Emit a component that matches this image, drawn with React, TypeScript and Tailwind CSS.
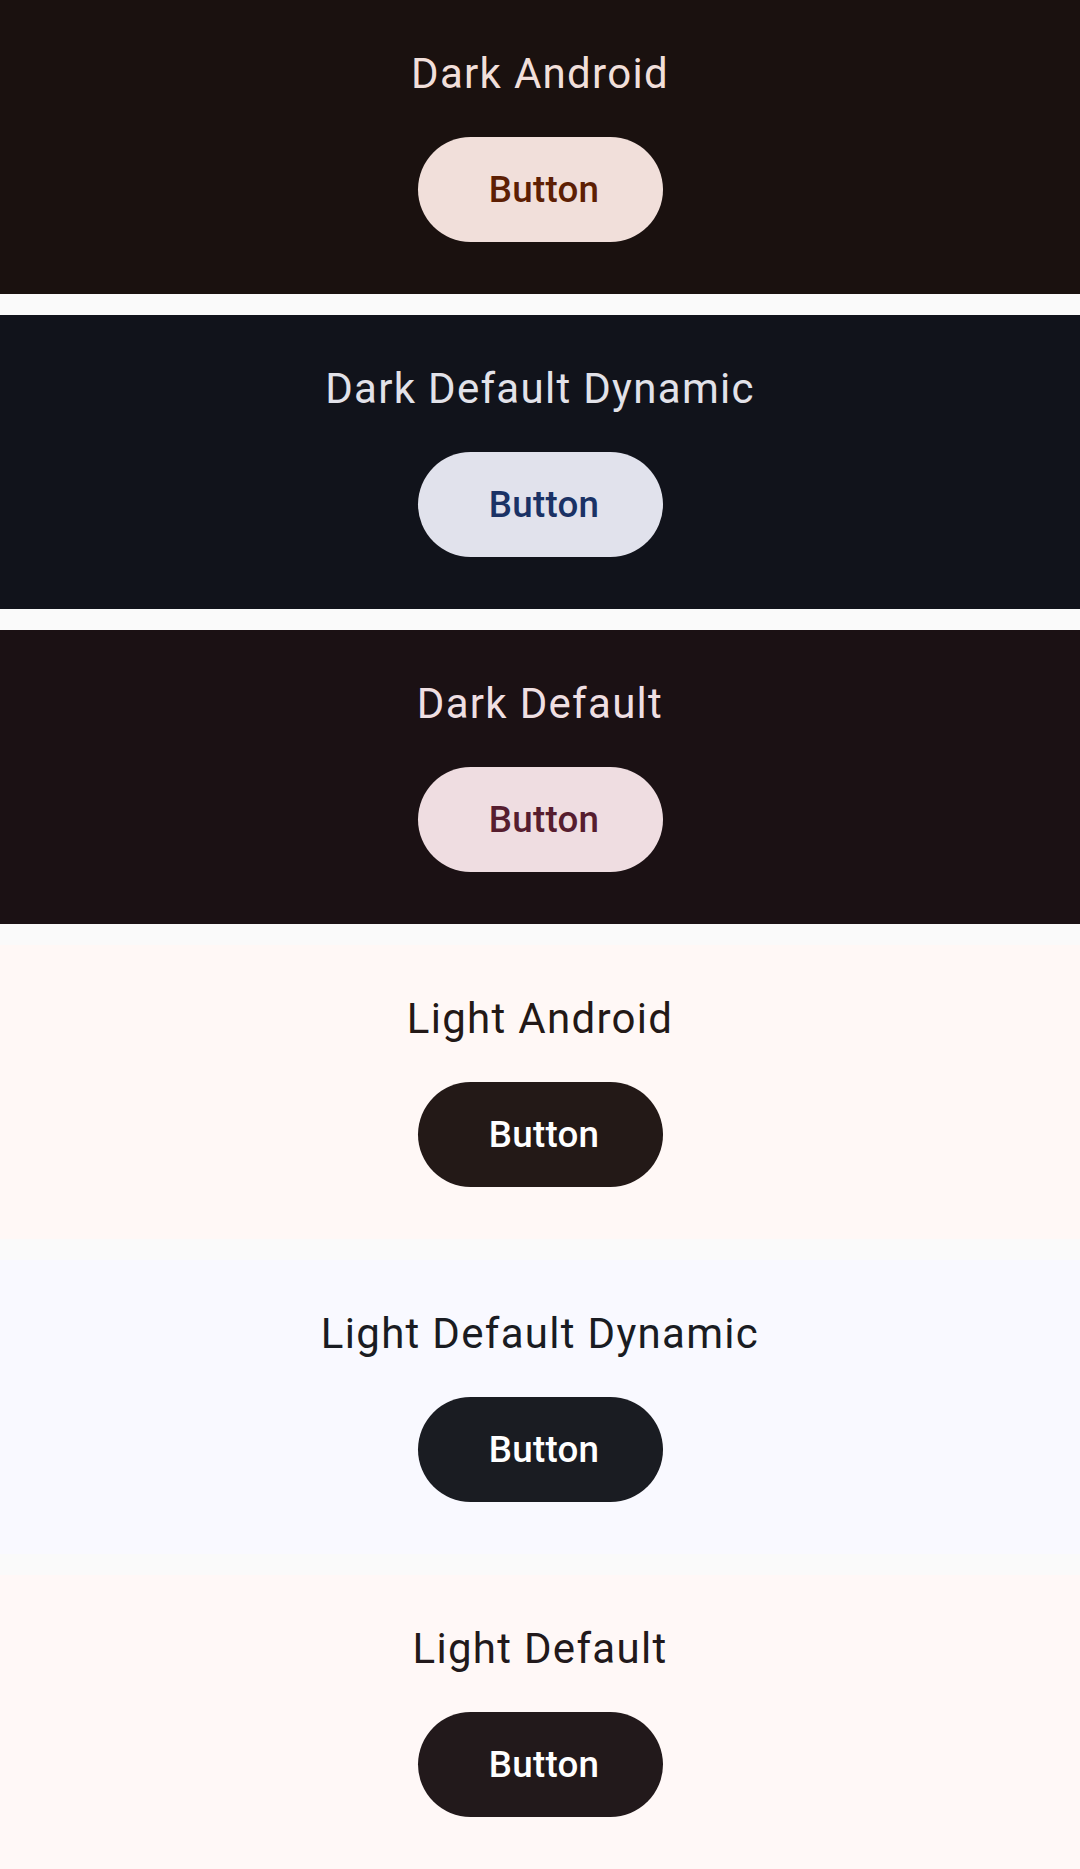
import React from 'react'

type Variant = {
  name: string
  bg: string
  title: string
  btnBg: string
  btnText: string
}

const variants: Variant[] = [
  { name: 'Dark Android', bg: 'bg-[#1a110f]', title: 'text-[#f1dfda]', btnBg: 'bg-[#f1dfda]', btnText: 'text-[#5d1f04]' },
  { name: 'Dark Default Dynamic', bg: 'bg-[#11131b]', title: 'text-[#e2e2e9]', btnBg: 'bg-[#e1e2ec]', btnText: 'text-[#1a3265]' },
  { name: 'Dark Default', bg: 'bg-[#1b1114]', title: 'text-[#efdfe2]', btnBg: 'bg-[#efdde1]', btnText: 'text-[#561d2f]' },
  { name: 'Light Android', bg: 'bg-[#fff8f6]', title: 'text-[#231917]', btnBg: 'bg-[#231917]', btnText: 'text-[#ffffff]' },
  { name: 'Light Default Dynamic', bg: 'bg-[#f9f9ff]', title: 'text-[#1a1c22]', btnBg: 'bg-[#1a1c22]', btnText: 'text-[#ffffff]' },
  { name: 'Light Default', bg: 'bg-[#fff8f7]', title: 'text-[#22191b]', btnBg: 'bg-[#22191b]', btnText: 'text-[#ffffff]' },
]

function ThemePreview({ v }: { v: Variant }) {
  return (
    <div className={`flex h-[294px] flex-col items-center pt-[42px] ${v.bg}`}>
      <div className={`text-[42px] leading-[63px] tracking-[1.3px] ${v.title}`}>{v.name}</div>
      <button
        className={`mt-[32px] flex h-[105px] w-[245px] items-center justify-center rounded-full pl-[8px] text-[36.75px] font-medium tracking-[0.26px] ${v.btnBg} ${v.btnText}`}
      >
        Button
      </button>
    </div>
  )
}

export default function App() {
  return (
    <div className="flex w-[1080px] flex-col gap-[21px] bg-[#fafafa] font-['Roboto',sans-serif]">
      {variants.map((v) => (
        <ThemePreview key={v.name} v={v} />
      ))}
    </div>
  )
}
